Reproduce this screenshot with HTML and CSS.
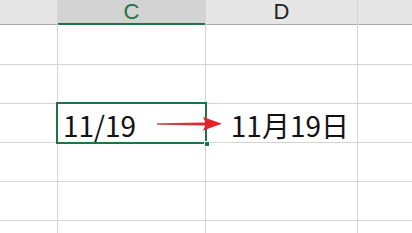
FILE: index.html
```html
<!DOCTYPE html>
<html lang="zh-CN">
<head>
  <meta charset="UTF-8">
  <title>11/19 → 11月19日</title>
  <link rel="stylesheet" href="styles.css">
</head>
<body>

<div class="sheet">
  <!-- column headers -->
  <div class="col-head"></div>
  <div class="col-head active">C</div>
  <div class="col-head">D</div>
  <div class="col-head"></div>

  <!-- row 1 -->
  <div class="cell"></div><div class="cell"></div><div class="cell"></div><div class="cell"></div>
  <!-- row 2 -->
  <div class="cell"></div><div class="cell"></div><div class="cell"></div><div class="cell"></div>
  <!-- row 3 -->
  <div class="cell"></div>
  <div class="cell text selected">11/19<span class="fill-handle"></span></div>
  <div class="cell date">11月19日</div>
  <div class="cell"></div>
  <!-- row 4 -->
  <div class="cell"></div><div class="cell"></div><div class="cell"></div><div class="cell"></div>
  <!-- row 5 -->
  <div class="cell"></div><div class="cell"></div><div class="cell"></div><div class="cell"></div>
  <!-- row 6 -->
  <div class="cell"></div><div class="cell"></div><div class="cell"></div><div class="cell"></div>

  <!-- red arrow -->
  <svg class="arrow" width="70" height="20" viewBox="0 0 70 20">
    <defs>
      <linearGradient id="shaft" x1="0" x2="1" y1="0" y2="0">
        <stop offset="0" stop-color="#b3262b" stop-opacity="0.8"/>
        <stop offset="1" stop-color="#e8202a"/>
      </linearGradient>
    </defs>
    <path d="M2 9.2 L50 8.4 L50 11.4 L2 10.8 Z" fill="url(#shaft)"/>
    <path d="M48 3 L67 9.8 L48 16.5 L51 9.8 Z" fill="#e5222b"/>
  </svg>
</div>

</body>
</html>
```

FILE: styles.css
```css
* {
  box-sizing: border-box;
}
body {
  margin: 0;
  background: white;
  font-family: "Noto Sans CJK SC", "Noto Sans", sans-serif;
  overflow: hidden;
}
.sheet {
  position: relative;
  display: grid;
  grid-template-columns: 57px 147px 151px 1fr;
  grid-template-rows: 24px 39px repeat(5, 38px);
  gap: 1px;
  background: #d4d4d4;
  height: 233px;
  overflow: hidden;
}
.col-head {
  background: #e6e6e6;
  box-shadow: 0 1px 0 #ababab;
  color: #222;
  font-family: "Liberation Sans", Arial, sans-serif;
  font-size: 22px;
  line-height: 24px;
  text-align: center;
}
.col-head.active {
  background: #d3d3d3;
  color: #217346;
  box-shadow: 0 1px 0 #217346, 0 -1px 0 #217346 inset;
}
.cell {
  background: white;
  position: relative;
  font-size: 28px;
  color: #111;
  display: flex;
  align-items: flex-end;
  line-height: 34px;
}
.cell.text {
  padding-left: 5px;
}
.cell.date {
  justify-content: flex-end;
  padding-right: 8px;
}
.cell.selected {
  outline: 2px solid #217346;
  z-index: 1;
}
.fill-handle {
  position: absolute;
  right: -5px;
  bottom: -5px;
  width: 6px;
  height: 6px;
  background: #217346;
  border: 1px solid white;
}
.arrow {
  position: absolute;
  left: 155px;
  top: 114px;
  z-index: 2;
}
```
